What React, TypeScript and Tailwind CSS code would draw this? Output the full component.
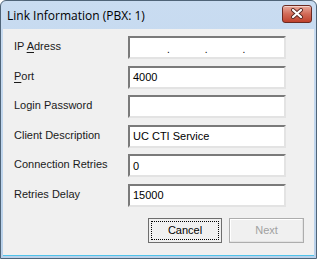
const fields = [
  { label: "IP Adress", accel: "A", value: "", ip: true },
  { label: "Port", accel: "P", value: "4000" },
  { label: "Login Password", value: "" },
  { label: "Client Description", value: "UC CTI Service" },
  { label: "Connection Retries", value: "0" },
  { label: "Retries Delay", value: "15000" },
];

const Label = ({ text, accel }: { text: string; accel?: string }) => {
  if (!accel) return <span>{text}</span>;
  const i = text.indexOf(accel);
  return (
    <span>
      {text.slice(0, i)}
      <span className="underline underline-offset-2">{accel}</span>
      {text.slice(i + 1)}
    </span>
  );
};

const CloseButton = () => (
  <div className="flex h-[18px] w-[30px] items-center justify-center rounded-[3px] border border-[#6b2a22] bg-gradient-to-b from-[#e8a99c] via-[#d16a57] to-[#c0412c] shadow-[inset_0_1px_0_rgba(255,255,255,0.5)]">
    <svg width="14" height="11" viewBox="0 0 14 11">
      <path
        d="M3 2 L11 9 M11 2 L3 9"
        stroke="#5a2a25"
        strokeWidth="4"
        strokeLinecap="round"
      />
      <path
        d="M3 2 L11 9 M11 2 L3 9"
        stroke="#ffffff"
        strokeWidth="2.2"
        strokeLinecap="round"
      />
    </svg>
  </div>
);

export default function App() {
  return (
    <div
      className="flex h-[259px] w-[317px] flex-col overflow-hidden rounded-t-[6px] border border-[#4f6478] bg-gradient-to-b from-[#c9dcf1] to-[#b9d1ea]"
      style={{ fontFamily: "'Liberation Sans', Arial, sans-serif" }}
    >
      <div className="flex h-[28px] shrink-0 items-center justify-between pl-[6px] pr-[4px]">
        <span
          className="pt-[1px] text-[12px] text-black"
          style={{ fontFamily: "'Open Sans', sans-serif" }}
        >
          Link Information (PBX: 1)
        </span>
        <div className="-mt-[3px]">
          <CloseButton />
        </div>
      </div>
      <div className="mx-[2px] mb-[2px] flex flex-1 flex-col border-b border-b-[#4fc3ea] bg-[#f0f0f0] pl-[11px] pr-[28px] pt-[7px]">
        <div className="flex flex-col gap-[6.6px]">
          {fields.map((f) => (
            <div key={f.label} className="flex h-[23px] items-start">
              <div className="w-[114px] pt-[2px] text-[11px] text-[#1a1a1a]">
                <Label text={f.label} accel={f.accel} />
              </div>
              <div className="flex h-[23px] flex-1 items-center border-2 border-t-[#7a7a7a] border-l-[#7a7a7a] border-b-[#e3e3e3] border-r-[#e3e3e3] bg-white pl-[3px] text-[11px] text-black">
                {f.ip ? (
                  <div className="ml-[34px] flex gap-[35px] pt-[5px] text-[10px] leading-none text-black">
                    <span>.</span>
                    <span>.</span>
                    <span>.</span>
                  </div>
                ) : (
                  f.value
                )}
              </div>
            </div>
          ))}
        </div>
        <div className="-mr-[18px] mt-[11px] flex justify-end gap-[7px]">
          <button className="flex h-[25px] w-[74px] items-center justify-center border border-[#6e6e6e] bg-[#f0f0f0] p-[2px] text-[11px] text-black">
            <span className="flex h-full w-full items-center justify-center border border-dotted border-black">
              Cancel
            </span>
          </button>
          <button className="flex h-[25px] w-[75px] items-center justify-center border border-[#adadad] bg-[#f0f0f0] text-[11px] text-[#a0a0a0] shadow-[inset_-1px_-1px_0_#e3e3e3,inset_1px_1px_0_#ffffff]">
            Next
          </button>
        </div>
      </div>
    </div>
  );
}
